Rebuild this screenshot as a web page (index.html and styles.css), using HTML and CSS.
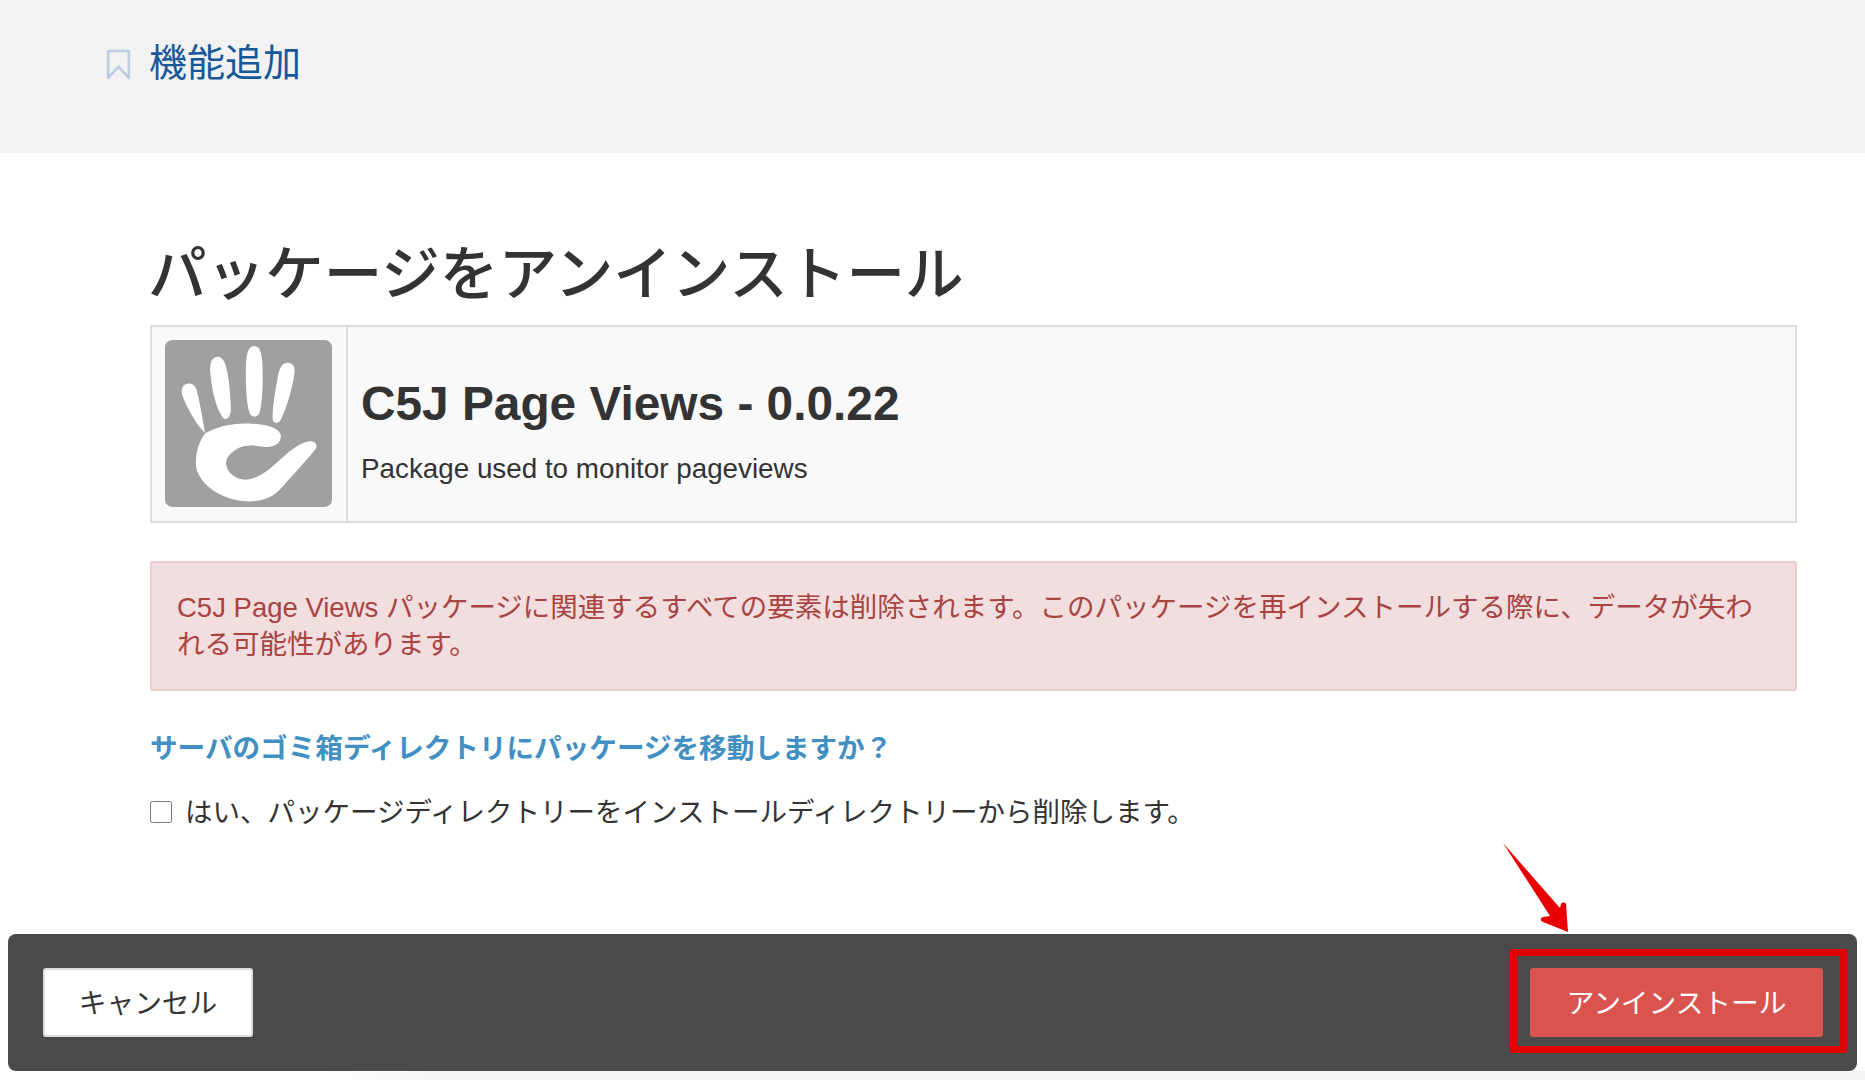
FILE: index.html
```html
<!DOCTYPE html>
<html lang="ja">
<head>
<meta charset="utf-8">
<title>パッケージをアンインストール</title>
<link rel="stylesheet" href="styles.css">
</head>
<body>
<header class="page-header">
  <svg class="bookmark" viewBox="0 0 24 30" aria-hidden="true"><path d="M2 2h20v26l-10-11L2 28z"/></svg>
  <span class="page-title">機能追加</span>
</header>
<main class="content">
  <h1 class="heading">パッケージをアンインストール</h1>
  <section class="package">
    <div class="package-icon">
      <svg class="hand" viewBox="0 0 500 500" aria-hidden="true">
        <rect width="500" height="500" rx="22" fill="#a0a0a0"/>
        <g fill="#fff">
          <path d="M70 130C50 132 46 150 54 172C70 210 95 255 120 278C112 235 105 190 95 150C90 136 82 129 70 130Z"/>
          <path d="M157 50C138 52 133 72 136 100C140 150 155 215 178 236C190 240 198 225 197 200C195 150 190 95 178 66C172 55 165 49 157 50Z"/>
          <path d="M267 18C248 18 242 45 242 90C242 140 244 200 255 222C262 232 276 232 282 220C292 190 293 130 292 85C291 45 286 18 267 18Z"/>
          <path d="M367 68C350 68 342 85 338 110C330 150 320 215 323 240C328 252 340 250 347 238C365 205 385 130 388 95C389 78 380 67 367 68Z"/>
          <path d="M120 280C155 258 205 248 250 250C300 252 348 262 347 290C345 312 325 322 300 320C270 316 240 312 218 325C195 338 182 352 183 372C185 398 215 420 245 418C285 414 315 385 345 358C370 335 400 310 428 304C448 300 460 314 450 328C425 358 395 392 365 424C345 448 330 465 305 474C275 486 235 486 200 476C150 462 100 425 93 378C90 345 100 305 120 280Z"/>
        </g>
      </svg>
    </div>
    <div class="package-info">
      <h2 class="package-name">C5J Page Views - 0.0.22</h2>
      <p class="package-desc">Package used to monitor pageviews</p>
    </div>
  </section>
  <div class="alert">C5J Page Views パッケージに関連するすべての要素は削除されます。このパッケージを再インストールする際に、データが失われる可能性があります。</div>
  <h3 class="question">サーバのゴミ箱ディレクトリにパッケージを移動しますか？</h3>
  <label class="check-row">
    <input class="check" type="checkbox">
    <span>はい、パッケージディレクトリーをインストールディレクトリーから削除します。</span>
  </label>
</main>
<div class="footer-wrap">
  <footer class="actions">
    <button class="btn btn-default" type="button">キャンセル</button>
    <button class="btn btn-danger" type="button">アンインストール</button>
    <span class="highlight"></span>
    <svg class="arrow" viewBox="0 0 70 94" aria-hidden="true"><path d="M0 0L57 65L58 61C59 59 62 59 63 61L65 89L40 79C37 78 37 75 40 74L47 73Z" fill="#e60000"/></svg>
  </footer>
</div>
</body>
</html>
```
FILE: styles.css
```css
* { box-sizing: border-box; }
html, body { margin: 0; padding: 0; }
body {
  width: 1865px;
  height: 1080px;
  overflow: hidden;
  background: #fff;
  color: #333;
  font-family: "Liberation Sans", "Noto Sans CJK JP", sans-serif;
}
.page-header {
  height: 153px;
  background: #f2f2f2;
  display: flex;
  align-items: flex-start;
  gap: 18px;
  padding: 41px 0 0 106px;
}
.bookmark {
  width: 25px;
  height: 31px;
  margin-top: 8px;
  fill: none;
  stroke: #bccde3;
  stroke-width: 2.5;
  stroke-linejoin: round;
}
.page-title {
  font-size: 38px;
  line-height: 44px;
  color: #17589b;
}
.content { padding: 0 68px 0 150px; }
.heading {
  margin: 0 0 0 -2px;
  padding-top: 86px;
  height: 172px;
  font-size: 58.6px;
  line-height: 72px;
  font-weight: 500;
  color: #333;
  white-space: nowrap;
}
.package {
  display: flex;
  height: 198px;
  border: 2px solid #ddd;
  background: #f9f9f9;
}
.package-icon {
  width: 196px;
  flex: none;
  padding: 13px;
  border-right: 2px solid #ddd;
}
.hand { display: block; width: 167px; height: 167px; }
.package-info { padding: 49px 13px 0 13px; }
.package-name {
  margin: 0;
  font-size: 47.8px;
  line-height: 56px;
  font-weight: 700;
}
.package-desc {
  margin: 19px 0 0;
  font-size: 27.8px;
  line-height: 36px;
}
.alert {
  margin-top: 38px;
  height: 130px;
  padding: 26px 25px 0;
  border: 2px solid #ebccd1;
  border-radius: 3px;
  background: #f2dede;
  color: #a94442;
  font-size: 27.5px;
  line-height: 37px;
}
.question {
  margin: 38px 0 0;
  font-size: 27.6px;
  line-height: 40px;
  font-weight: 700;
  color: #428fc4;
}
.check-row {
  display: flex;
  align-items: center;
  gap: 13px;
  margin-top: 24px;
  font-size: 27.5px;
  line-height: 40px;
}
.check {
  width: 22px;
  height: 22px;
  margin: -2px 0 0;
  flex: none;
}
.footer-wrap {
  position: absolute;
  left: 0;
  right: 0;
  top: 934px;
  height: 146px;
  padding: 0 8px;
  background: linear-gradient(to right, #fff 17%, #f4f4f4 24%);
  background-size: 100% 9px;
  background-position: bottom;
  background-repeat: no-repeat;
}
.actions {
  position: relative;
  height: 137px;
  display: flex;
  justify-content: space-between;
  align-items: center;
  padding: 0 34px 0 35px;
  background: #4a4a4a;
  border-radius: 8px;
}
.btn {
  height: 69px;
  border-radius: 3px;
  font: inherit;
  font-size: 27.7px;
  padding: 0 0 4px;
}
.btn-default {
  width: 210px;
  background: #fff;
  border: 2px solid #ddd;
  color: #333;
}
.btn-danger {
  width: 293px;
  background: #d9534f;
  border: 2px solid #d9534f;
  color: #fff;
}
.highlight {
  position: absolute;
  left: 1502px;
  top: 15px;
  width: 337px;
  height: 104px;
  border: 7px solid #e00000;
  border-radius: 2px;
}
.arrow {
  position: absolute;
  left: 1495px;
  top: -91px;
  width: 70px;
  height: 94px;
}
```
